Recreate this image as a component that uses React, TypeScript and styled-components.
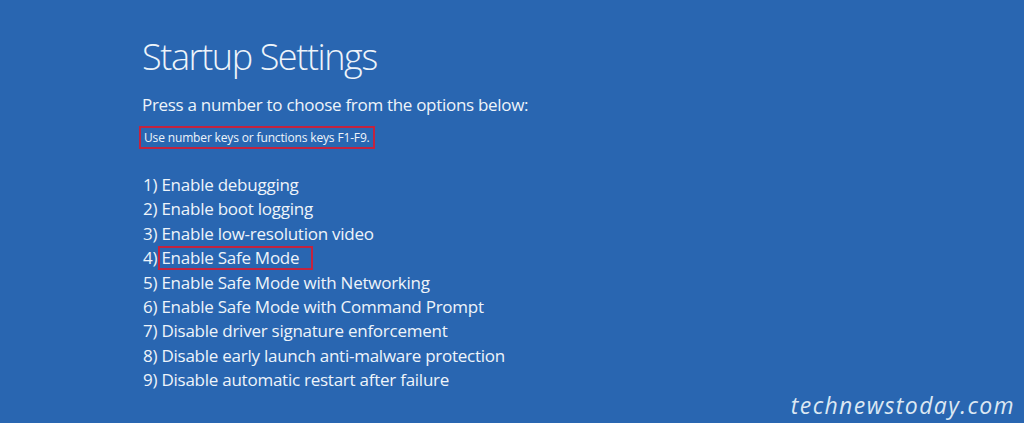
import styled, { createGlobalStyle } from 'styled-components';

const options = [
  'Enable debugging',
  'Enable boot logging',
  'Enable low-resolution video',
  'Enable Safe Mode',
  'Enable Safe Mode with Networking',
  'Enable Safe Mode with Command Prompt',
  'Disable driver signature enforcement',
  'Disable early launch anti-malware protection',
  'Disable automatic restart after failure',
];

const App = () => {
  return (
    <>
      <GlobalStyle />
      <Screen>
        <Content>
          <Title>Startup Settings</Title>
          <Prompt>Press a number to choose from the options below:</Prompt>
          <Hint>Use number keys or functions keys F1-F9.</Hint>
          <OptionList>
            {options.map((text, i) => (
              <Option key={text}>
                {i + 1}){' '}
                {i === 3 ? <Marked>{text}</Marked> : text}
              </Option>
            ))}
          </OptionList>
        </Content>
        <Watermark>technewstoday.com</Watermark>
      </Screen>
    </>
  );
};

export default App;

const GlobalStyle = createGlobalStyle`
  html, body {
    margin: 0;
    padding: 0;
    background: #2966b1;
  }
`;

const Screen = styled.div`
  width: 1024px;
  height: 423px;
  background: #2966b1;
  color: #eef4fa;
  font-family: "Open Sans", "Noto Sans", sans-serif;
  display: flex;
  flex-direction: column;
  overflow: hidden;
`;

const Content = styled.div`
  padding: 35px 0 0 142px;
  display: flex;
  flex-direction: column;
  align-items: flex-start;
  flex: 1;
`;

const Title = styled.h1`
  margin: 0;
  font-size: 36px;
  line-height: 44px;
  font-weight: 300;
  letter-spacing: -1.4px;
`;

const Prompt = styled.p`
  margin: 14px 0 0;
  font-size: 17px;
  line-height: 24px;
  font-weight: 400;
  letter-spacing: -0.3px;
`;

const Hint = styled.div`
  margin: 9px 0 0 -3px;
  border: 2px solid #c3233f;
  padding: 1px 3px;
  font-size: 12px;
  line-height: 17px;
  letter-spacing: -0.15px;
`;

const OptionList = styled.ol`
  list-style: none;
  margin: 24px 0 0 1px;
  padding: 0;
`;

const Option = styled.li`
  font-size: 17px;
  line-height: 24.4px;
  letter-spacing: -0.25px;
`;

const Marked = styled.span`
  display: inline-block;
  border: 2px solid #c3233f;
  padding: 0 12px 0 1px;
  margin-left: -3px;
  line-height: 20px;
`;

const Watermark = styled.div`
  align-self: flex-end;
  margin: 0 9px 6px 0;
  font-family: "Open Sans", sans-serif;
  font-style: italic;
  font-size: 23px;
  line-height: 24px;
  letter-spacing: 1.4px;
  color: #dce8f3;
`;
